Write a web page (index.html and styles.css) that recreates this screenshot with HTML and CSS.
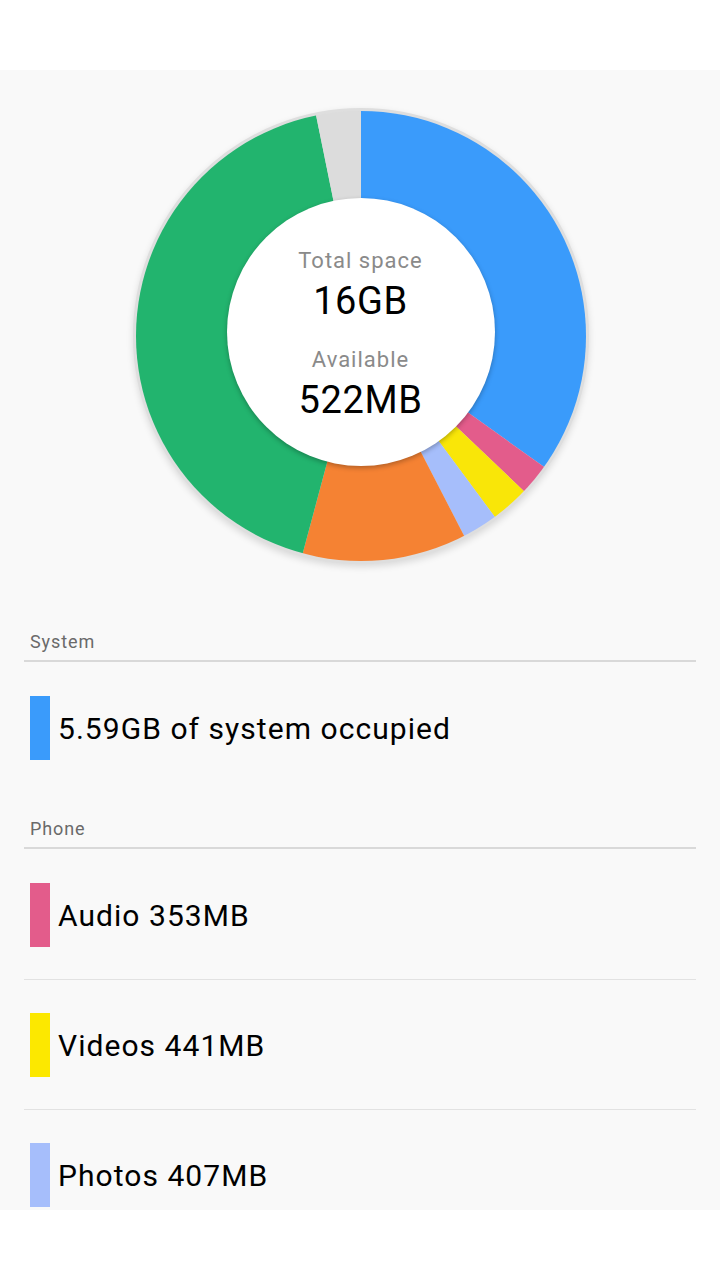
FILE: index.html
```html
<!DOCTYPE html>
<html lang="en">
<head>
<meta charset="utf-8">
<title>Storage</title>
<link rel="stylesheet" href="styles.css">
</head>
<body>
<div class="topbar"></div>
<main class="content">
  <div class="chart-wrap">
    <div class="donut">
      <svg class="slices" viewBox="0 0 450 450" width="450" height="450">
        <path fill="#3A9BFB" d="M225,225 L225,-2 A227,227 0 0,1 409.6,357.1 Z"/>
        <path fill="#E35C8B" d="M225,225 L409.6,357.1 A227,227 0 0,1 389.4,381.5 Z"/>
        <path fill="#F9E608" d="M225,225 L389.4,381.5 A227,227 0 0,1 360,407.5 Z"/>
        <path fill="#A6BEFB" d="M225,225 L360,407.5 A227,227 0 0,1 329.1,426.7 Z"/>
        <path fill="#F58233" d="M225,225 L329.1,426.7 A227,227 0 0,1 166.2,444.3 Z"/>
        <path fill="#22B46E" d="M225,225 L166.2,444.3 A227,227 0 0,1 179.7,2.5 Z"/>
        <path fill="#DCDCDC" d="M225,225 L179.7,2.5 A227,227 0 0,1 225,-2 Z"/>
      </svg>
      <div class="center">
        <div class="label">Total space</div>
        <div class="value">16GB</div>
        <div class="label label-second">Available</div>
        <div class="value">522MB</div>
      </div>
    </div>
  </div>

  <section class="group">
    <div class="group-title">System</div>
    <div class="row"><span class="swatch swatch-system"></span><span class="row-text">5.59GB of system occupied</span></div>
  </section>

  <section class="group group-phone">
    <div class="group-title">Phone</div>
    <div class="row"><span class="swatch swatch-audio"></span><span class="row-text">Audio 353MB</span></div>
    <div class="row"><span class="swatch swatch-videos"></span><span class="row-text">Videos 441MB</span></div>
    <div class="row"><span class="swatch swatch-photos"></span><span class="row-text">Photos 407MB</span></div>
  </section>
</main>
<div class="bottombar"></div>
</body>
</html>
```
FILE: styles.css
```css
* { box-sizing: border-box; }

html, body {
  margin: 0;
  padding: 0;
  background: #ffffff;
  font-family: Roboto, "Noto Sans", "Liberation Sans", sans-serif;
  color: #000;
}

.topbar {
  height: 70px;
  background: #ffffff;
}

.bottombar {
  height: 70px;
  background: #ffffff;
}

.content {
  height: 1140px;
  overflow: hidden;
  background: #f9f9f9;
}

.chart-wrap {
  display: flex;
  justify-content: center;
  padding: 38px 0 0 1px;
}

.donut {
  position: relative;
  width: 456px;
  height: 456px;
  border-radius: 50%;
  border: 3px solid #dedede;
  overflow: hidden;
  box-shadow: 0 3px 7px rgba(0, 0, 0, 0.13);
  background: #dedede;
}

.slices {
  display: block;
}

.center {
  position: absolute;
  left: 91px;
  top: 87px;
  width: 268px;
  height: 268px;
  border-radius: 50%;
  background: #ffffff;
  box-shadow: 0 2px 5px rgba(0, 0, 0, 0.28);
  display: flex;
  flex-direction: column;
  align-items: center;
  padding-top: 50px;
}

.label {
  font-size: 22px;
  line-height: 26px;
  letter-spacing: 1px;
  color: #8a8a8a;
}

.label-second {
  margin-top: 24px;
}

.value {
  font-size: 38px;
  line-height: 44px;
  letter-spacing: 0.6px;
  margin-top: 5px;
  color: #000;
}

.group {
  margin: 67px 24px 0;
}

.group-phone {
  margin-top: 26px;
}

.group-title {
  font-size: 18px;
  line-height: 21px;
  letter-spacing: 0.9px;
  color: #6a6a6a;
  padding: 0 0 8px 6px;
  border-bottom: 2px solid #d9d9d9;
  margin-bottom: 1px;
}

.row {
  display: flex;
  align-items: center;
  padding: 33px 0 32px 6px;
}

.row + .row {
  border-top: 1px solid #e2e2e2;
}

.swatch {
  width: 20px;
  height: 64px;
  flex: none;
}

.swatch-system { background: #3A9BFB; }
.swatch-audio { background: #E35C8B; }
.swatch-videos { background: #FCE800; }
.swatch-photos { background: #A6BEFB; }

.row-text {
  margin-left: 8px;
  font-size: 30px;
  letter-spacing: 1.05px;
  color: #000;
}
```
